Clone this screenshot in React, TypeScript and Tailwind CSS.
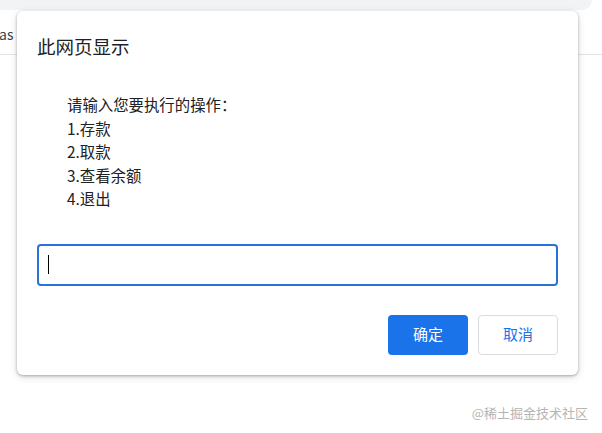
export default function App() {
  return (
    <div
      className="relative h-[433px] w-[602px] overflow-hidden bg-white text-[#202124]"
      style={{ fontFamily: '"Microsoft YaHei", "Noto Sans CJK SC", "Noto Sans", sans-serif' }}
    >
      {/* browser toolbar fragment */}
      <div className="h-[10px] w-[592px] rounded-br-[10px] bg-[#f1f3f4]" />

      {/* page behind */}
      <div className="flex h-[45px] items-center border-b border-[#e3e3e3] pl-0 text-[14px] text-[#3c4043]">
        <span className="-ml-[1px] mt-[4px]">as</span>
      </div>

      {/* alert dialog */}
      <div className="absolute left-[17px] top-[11px] flex h-[364px] w-[561px] flex-col rounded-[6px] bg-white px-[20px] shadow-[0_1px_3px_rgba(0,0,0,0.3),0_2px_8px_rgba(0,0,0,0.12)]">
        <div className="mt-[23px] text-[18.5px] leading-[25px] text-[#202124]">此网页显示</div>

        <div className="ml-[30px] mt-[34px] text-[15.4px] leading-[23.5px]">
          <div>请输入您要执行的操作：</div>
          <div>1.存款</div>
          <div>2.取款</div>
          <div>3.查看余额</div>
          <div>4.退出</div>
        </div>

        <div className="mt-[33px] flex h-[42px] w-[521px] items-center rounded-[4px] border-2 border-[#2a72d8] px-[9px]">
          <div className="h-[19px] w-px bg-black" />
        </div>

        <div className="mt-[29px] flex justify-end gap-[10px]">
          <button className="flex h-[40px] w-[80px] items-center justify-center rounded-[4px] bg-[#1a73e8] text-[15px] text-white">
            确定
          </button>
          <button className="flex h-[40px] w-[80px] items-center justify-center rounded-[4px] border border-[#dadce0] bg-white text-[15px] text-[#1a73e8]">
            取消
          </button>
        </div>
      </div>

      {/* watermark */}
      <div className="absolute right-[14px] top-[403px] text-[13px] leading-[20px] text-[#b5b5b5]">
        @稀土掘金技术社区
      </div>
    </div>
  );
}
